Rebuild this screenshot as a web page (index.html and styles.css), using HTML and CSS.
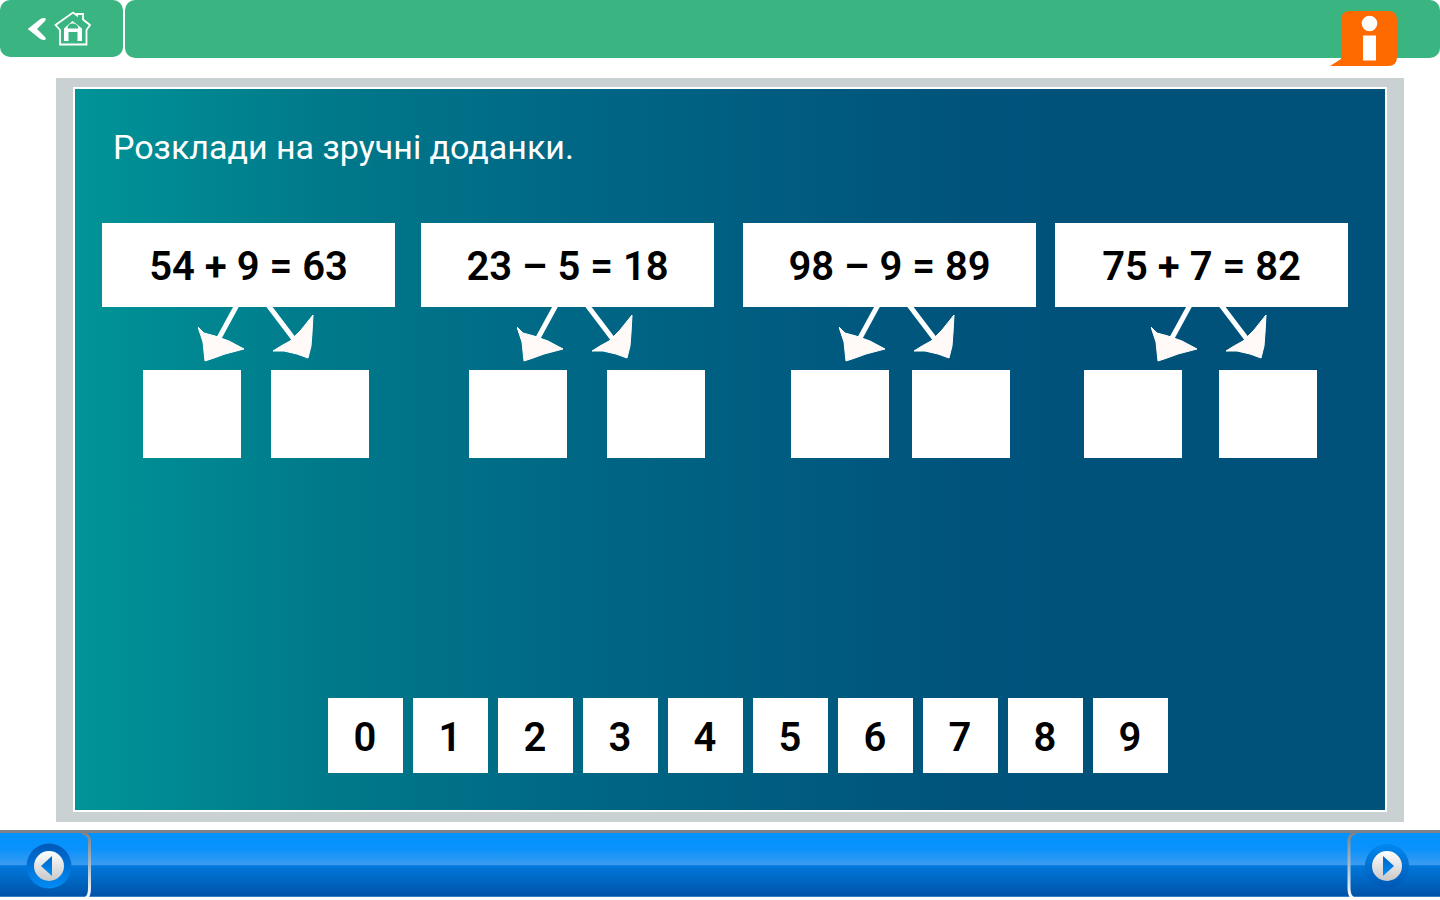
FILE: index.html
```
<!DOCTYPE html>
<html lang="uk">
<head>
<meta charset="utf-8">
<meta name="viewport" content="width=device-width, initial-scale=1">
<title>Розклади на зручні доданки</title>
<link rel="stylesheet" href="styles.css">
</head>
<body>
<svg class="defs" aria-hidden="true">
  <defs>
    <linearGradient id="silver" x1="0" y1="0" x2="0" y2="1"><stop offset="0" stop-color="#fff"/><stop offset="1" stop-color="#c8c8c8"/></linearGradient>
    <linearGradient id="ring" x1="0" y1="0" x2="0" y2="1"><stop offset="0" stop-color="#0058b8"/><stop offset="1" stop-color="#008cf5"/></linearGradient>
    <linearGradient id="ring-dim" x1="0" y1="0" x2="0" y2="1"><stop offset="0" stop-color="#0088f0"/><stop offset="1" stop-color="#0058b4"/></linearGradient>
    <linearGradient id="mark" x1="0" y1="0" x2="0" y2="1"><stop offset="0" stop-color="#0062c4"/><stop offset="1" stop-color="#0090f8"/></linearGradient>
    <linearGradient id="edge" gradientUnits="userSpaceOnUse" x1="0" y1="0" x2="0" y2="66"><stop offset="0" stop-color="#7c8288"/><stop offset="0.500" stop-color="#a9bccd"/><stop offset="0.850" stop-color="#e8eff6"/><stop offset="1" stop-color="#fff"/></linearGradient>
    <g id="arrows">
      <path d="M39-2 21 31M70-2 95 31" stroke="#fff" stroke-width="5" fill="none"/>
      <path d="M0 20 6 26 17 29 31 34 46 42 27 47 16 51 7 54 5 35Z" fill="#fffaf7" stroke="#fff"/>
      <path d="M115 8 114 26 113 39 110 51 99 47 86 44 75 44 83 39 92 34 103 23Z" fill="#fffaf7" stroke="#fff"/>
    </g>
  </defs>
</svg>
<header class="top">
  <a class="home" href="#" aria-label="На головну">
    <svg width="18" height="24" viewBox="0 0 18 24"><path d="M16 1Q19 1 17 4L9 12 17 20Q19 23 16 23 13 23 11 21L1 13Q-1 12 1 11L11 3Q13 1 16 1Z" fill="#fff"/></svg>
    <svg width="38" height="36" viewBox="0 0 38 36">
      <path d="M1.500 14 19 1.500 23 4.500V3H29V8.500L36 14 32.500 19V33.500H6V19Z" fill="none" stroke="#fff" stroke-width="1.800"/>
      <path d="M10 30V17.500L18.500 10 28 17.500V30H23.500V21H14.500V30Z" fill="#fff"/>
      <path d="M13.500 17.500Q14 12.500 18.500 12.500 23.500 12.500 24.500 17.500Z" fill="#3ab582"/>
    </svg>
  </a>
  <div class="bar">
    <button class="info" type="button" aria-label="Інформація">
      <svg width="67" height="56" viewBox="0 0 67 56"><path d="M11 9Q11 0 20 0H58Q67 0 67 9V46Q67 55 58 55H0L11 48Z" fill="#ff6a00"/><circle cx="39.500" cy="12.500" r="7.800" fill="#fff"/><path d="M33 24.500H46V49.500H33Z" fill="#fff"/></svg>
    </button>
  </div>
</header>
<main class="frame">
  <section class="board">
    <h1>Розклади на зручні доданки.</h1>
    <div class="tasks">
      <div class="task">
        <p class="sum">54 + 9 = 63</p>
        <svg class="split" width="120" height="63"><use href="#arrows"/></svg>
        <div class="parts parts-a"><input aria-label="54 + 9, перший доданок"><input aria-label="54 + 9, другий доданок"></div>
      </div>
      <div class="task">
        <p class="sum">23 – 5 = 18</p>
        <svg class="split" width="120" height="63"><use href="#arrows"/></svg>
        <div class="parts parts-b"><input aria-label="23 – 5, перша частина"><input aria-label="23 – 5, друга частина"></div>
      </div>
      <div class="task">
        <p class="sum">98 – 9 = 89</p>
        <svg class="split" width="120" height="63"><use href="#arrows"/></svg>
        <div class="parts parts-c"><input aria-label="98 – 9, перша частина"><input aria-label="98 – 9, друга частина"></div>
      </div>
      <div class="task">
        <p class="sum">75 + 7 = 82</p>
        <svg class="split" width="120" height="63"><use href="#arrows"/></svg>
        <div class="parts parts-d"><input aria-label="75 + 7, перший доданок"><input aria-label="75 + 7, другий доданок"></div>
      </div>
    </div>
    <div class="digits">
      <button type="button">0</button><button type="button">1</button><button type="button">2</button><button type="button">3</button><button type="button">4</button><button type="button">5</button><button type="button">6</button><button type="button">7</button><button type="button">8</button><button type="button">9</button>
    </div>
  </section>
</main>
<nav class="bottom">
  <button class="step prev" type="button" aria-label="Назад">
    <svg width="46" height="46" viewBox="0 0 46 46"><circle cx="23" cy="23" r="22.500" fill="url(#ring)"/><circle cx="23" cy="23" r="15" fill="url(#silver)"/><path d="M26 13V33L15 23Z" fill="url(#mark)"/></svg>
    <svg width="12" height="66" viewBox="0 0 12 66"><path d="M2 0Q9.500 1 9.500 8V55Q9.500 63 6 65" fill="none" stroke="url(#edge)" stroke-width="3"/></svg>
  </button>
  <button class="step next" type="button" aria-label="Вперед">
    <svg width="12" height="66" viewBox="0 0 12 66"><path d="M9 0Q2 1 2 8V55Q2 63 6 65" fill="none" stroke="url(#edge)" stroke-width="3"/></svg>
    <svg width="46" height="46" viewBox="0 0 46 46"><circle cx="23" cy="23" r="22" fill="url(#ring-dim)"/><circle cx="23" cy="23" r="15" fill="url(#silver)"/><path d="M19 13V33L30 23Z" fill="url(#mark)"/></svg>
  </button>
</nav>
</body>
</html>
```
FILE: styles.css
```
* {
  box-sizing: border-box;
}

body {
  margin: 0;
  min-height: 100vh;
  display: flex;
  flex-direction: column;
  background: #fff;
  font-family: Roboto, "Liberation Sans", sans-serif;
}

button {
  border: 0;
  padding: 0;
  font: inherit;
  cursor: pointer;
}

svg {
  display: block;
}

.defs {
  position: absolute;
  width: 0;
  height: 0;
}

.top {
  display: flex;
  align-items: flex-start;
  gap: 2px;
}

.home {
  display: flex;
  align-items: center;
  gap: 8px;
  width: 123px;
  height: 57px;
  padding-left: 28px;
  border-radius: 10px;
  background: #3ab582;
}

.bar {
  position: relative;
  flex: 1;
  height: 58px;
  border-radius: 10px;
  background: #3ab582;
}

.info {
  position: absolute;
  top: 11px;
  right: 43px;
  background: none;
}

.frame {
  flex: 1;
  display: flex;
  margin: 20px 36px 8px 56px;
  padding: 9px 17px 10px;
  background: #c9d1d3;
}

.board {
  flex: 1;
  display: flex;
  flex-direction: column;
  padding: 36px 37px 37px 27px;
  border: 2px solid #fff;
  background: linear-gradient(90deg, #009498 0%, #00788a 20%, #006685 40%, #00567d 63%, #00527b 75%);
}

h1 {
  margin: 0;
  padding-left: 11px;
  font-size: 34px;
  line-height: 44px;
  font-weight: 400;
  color: #fff;
}

.tasks {
  display: grid;
  grid-template-columns: 319fr 322fr 312fr 293px;
  margin-top: 54px;
}

.sum {
  width: 293px;
  margin: 0;
  padding-top: 4px;
  background: #fff;
  color: #000;
  font-size: 40px;
  line-height: 80px;
  font-weight: 600;
  text-align: center;
}

.split {
  margin-left: 96px;
}

.parts {
  display: flex;
}

.parts input {
  width: 98px;
  height: 88px;
  padding: 0;
  border: 0;
  background: #fff;
  font: 600 40px Roboto, sans-serif;
  text-align: center;
}

.parts-a {
  padding-left: 41px;
  gap: 30px;
}

.parts-b {
  padding-left: 48px;
  gap: 40px;
}

.parts-c {
  padding-left: 48px;
  gap: 23px;
}

.parts-d {
  padding-left: 29px;
  gap: 37px;
}

.digits {
  display: flex;
  justify-content: center;
  gap: 10px;
  margin-top: auto;
  padding-left: 45px;
}

.digits button {
  width: 75px;
  height: 75px;
  padding-top: 4px;
  background: #fff;
  color: #000;
  font-size: 40px;
  font-weight: 600;
}

.bottom {
  display: flex;
  justify-content: space-between;
  height: 67px;
  margin-bottom: 3px;
  border-top: 3px solid #7c8288;
  background: linear-gradient(#0092ff 0%, #0a92fb 25%, #3a9cf0 50%, #0078dc 51%, #0054a8 98%, #5a9ad8 100%);
}

.step {
  display: flex;
  align-items: center;
  height: 66px;
  background: none;
}

.prev {
  justify-content: space-between;
  width: 92px;
  padding-left: 26px;
}

.next {
  gap: 5px;
  width: 93px;
}
```
